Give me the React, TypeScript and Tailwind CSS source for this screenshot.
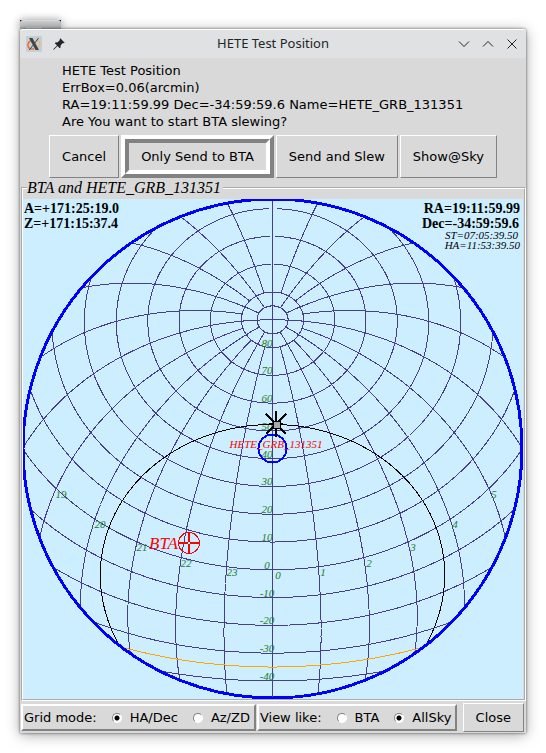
import type { ButtonHTMLAttributes, FC } from "react";

const LATITUDE = 43.65;
const CENTER = 249.5;
const SCALE = 250 / 90;

type SkyPoint = { x: number; y: number; z: number };

const rad = (deg: number) => (deg * Math.PI) / 180;

// Equidistant zenithal projection, north up, west right.
// Points below the horizon are folded back around the nadir.
const project = (ha: number, dec: number): SkyPoint => {
  const h = rad(ha);
  const d = rad(dec);
  const p = rad(LATITUDE);
  const up = Math.sin(p) * Math.sin(d) + Math.cos(p) * Math.cos(d) * Math.cos(h);
  const west = Math.cos(d) * Math.sin(h);
  const north =
    Math.sin(d) * Math.cos(p) - Math.cos(d) * Math.sin(p) * Math.cos(h);
  const z = (Math.acos(Math.max(-1, Math.min(1, up))) * 180) / Math.PI;
  const len = Math.hypot(west, north) || 1;
  const r = (z > 90 ? 180 - z : z) * SCALE;
  return { x: CENTER + (r * west) / len, y: CENTER - (r * north) / len, z };
};

const toPath = (points: SkyPoint[], keep: (p: SkyPoint) => boolean) => {
  let pen = false;
  let path = "";
  points.forEach((p) => {
    if (!keep(p)) {
      pen = false;
      return;
    }
    path += `${pen ? "L" : "M"}${p.x.toFixed(1)} ${p.y.toFixed(1)}`;
    pen = true;
  });
  return path;
};

const visible = (p: SkyPoint) => p.z <= 90;
const hidden = (p: SkyPoint) => p.z >= 90;

const parallel = (dec: number, from: number, to: number) => {
  const points: SkyPoint[] = [];
  for (let ha = from; ha <= to; ha += 0.5) points.push(project(ha, dec));
  return points;
};

const meridian = (hour: number) => {
  const top = hour % 6 === 0 ? 90 : hour % 2 === 0 ? 85 : 80;
  const points: SkyPoint[] = [];
  for (let dec = top; dec >= -46; dec -= 1) points.push(project(hour * 15, dec));
  return points;
};

const decRings = [85, 80, 70, 60, 50, 40, 30, 20, 10, 0, -10, -20, -30, -40];
const decLabels = decRings.slice(1);
const hourLabels = [19, 20, 21, 22, 23, 0, 1, 2, 3, 4, 5];
const hours = Array.from({ length: 24 }, (_, i) => i);

const SkyChart: FC = () => (
  <svg
    viewBox="0 0 500 500"
    className="block h-auto w-full bg-[#cceeff] font-['Liberation_Serif',serif]"
    role="img"
    aria-label="All sky chart"
  >
    <g fill="none" stroke="#483d8b" strokeWidth="1" shapeRendering="crispEdges">
      {decRings.map((dec) => (
        <path key={dec} d={toPath(parallel(dec, -178.5, 178.5), visible)} />
      ))}
      {hours.map((hour) => (
        <path key={hour} d={toPath(meridian(hour), visible)} />
      ))}
    </g>
    <g fill="#1e7d2a" fontSize="11" fontStyle="italic" textAnchor="middle">
      {decLabels.map((dec) => (
        <text key={dec} x="244" y={Math.round(project(0, dec).y) - 1}>
          {dec}
        </text>
      ))}
      {hourLabels.map((hour) => {
        const p = project(hour * 15, 0);
        return (
          <text key={hour} x={Math.round(p.x) + 5} y={Math.round(p.y) + 9}>
            {hour}
          </text>
        );
      })}
    </g>
    <g fill="none" shapeRendering="crispEdges">
      <path d={toPath(parallel(-35, 0, 360), hidden)} stroke="#000" />
      <path d={toPath(parallel(-35, -90, 90), visible)} stroke="#ffa500" />
      <circle cx="249.5" cy="249.5" r="249.5" stroke="#00f" strokeWidth="3" />
      <circle cx="249.5" cy="249.5" r="14" stroke="#00f" strokeWidth="2" />
    </g>

    <g stroke="#000" strokeWidth="2" shapeRendering="crispEdges">
      <path d="M253 212V238M243 215L263 235M263 215L243 235M246 225H260" />
      <rect x="250" y="222" width="7" height="7" fill="#a9a9a9" strokeWidth="1" />
    </g>
    <text
      x="253"
      y="249"
      fontSize="11"
      fontStyle="italic"
      textAnchor="middle"
      fill="#f00"
    >
      HETE_GRB_131351
    </text>

    <g fill="none" stroke="#f00" shapeRendering="crispEdges">
      <circle cx="166" cy="344" r="10.5" />
      <path d="M166 333V343M166 345V355M155 344H165M167 344H177" strokeWidth="2" />
    </g>
    <text x="126" y="350" fontSize="17" fontStyle="italic" fill="#f00">
      BTA
    </text>

    <g fontSize="14" fontWeight="bold">
      <text x="1" y="14">A=+171:25:19.0</text>
      <text x="1" y="29">Z=+171:15:37.4</text>
      <text x="497" y="14" textAnchor="end">
        RA=19:11:59.99
      </text>
      <text x="496" y="29" textAnchor="end">
        Dec=-34:59:59.6
      </text>
    </g>
    <g fontSize="11" fontStyle="italic" textAnchor="end">
      <text x="495" y="40">ST=07:05:39.50</text>
      <text x="497" y="50">HA=11:53:39.50</text>
    </g>
  </svg>
);

const TkButton: FC<ButtonHTMLAttributes<HTMLButtonElement>> = ({
  className = "",
  ...props
}) => (
  <button
    type="button"
    className={`border border-t-white border-r-[#828282] border-b-[#828282] border-l-white bg-[#d9d9d9] px-3 whitespace-nowrap ${className}`}
    {...props}
  />
);

type TkRadioProps = {
  name: string;
  label: string;
  defaultChecked?: boolean;
};

const TkRadio: FC<TkRadioProps> = ({ name, label, defaultChecked }) => (
  <label className="flex items-center gap-2 whitespace-nowrap">
    <input
      type="radio"
      name={name}
      defaultChecked={defaultChecked}
      className="size-[10px] appearance-none rounded-full border border-t-[#828282] border-r-white border-b-white border-l-[#828282] bg-white checked:bg-[radial-gradient(circle,#000_2px,#fff_3px)]"
    />
    {label}
  </label>
);

const XLogo: FC = () => (
  <svg viewBox="0 0 16 16" className="size-4" aria-hidden="true">
    <rect width="16" height="16" rx="1" fill="#c3ced6" />
    <path
      d="M6 4.500C3 5 1.500 7.500 2 9.800C2.500 12 5 13.300 8 12.800"
      fill="none"
      stroke="#f0702a"
      strokeWidth="1.500"
    />
    <path
      d="M10 3.800C13 4.500 14.600 7 13.800 9.300C13.200 11 12 12 10.500 12.500"
      fill="none"
      stroke="#f3b66f"
      strokeWidth="1.200"
    />
    <path d="M3 2H6.500L13 14H9.500Z" fill="#444" />
    <path d="M12.500 2L8.800 7M7 9.200L3.300 14" stroke="#444" strokeWidth="1" />
  </svg>
);

const PinIcon: FC = () => (
  <svg viewBox="0 0 12 12" className="size-3" aria-hidden="true">
    <path
      d="M7.300 0.300L11.700 4.700L10.800 5.300L9.900 5.100L7.700 7.300L7.500 9.600L6.700 10.200L4.500 8L1 11.600L0.200 11.800L0.400 11L4 7.500L1.800 5.300L2.400 4.500L4.700 4.300L6.900 2.100L6.700 1.200Z"
      fill="#232629"
    />
  </svg>
);

const TitleBar: FC = () => (
  <header className="grid h-[29px] grid-cols-[1fr_auto_1fr] items-center rounded-t-[3px] border-t border-white bg-[#dfe1e3] px-1.5 font-['Noto_Sans',sans-serif] text-[13px] text-[#232629]">
    <div className="flex items-center gap-[11px]">
      <XLogo />
      <button type="button" aria-label="Pin">
        <PinIcon />
      </button>
    </div>
    <h1>HETE Test Position</h1>
    <div className="flex items-center justify-end gap-3 pr-0.5">
      <button type="button" aria-label="Minimize">
        <svg viewBox="0 0 12 12" className="size-3" aria-hidden="true">
          <path d="M1 3.500L6 8.500L11 3.500" fill="none" stroke="#232629" />
        </svg>
      </button>
      <button type="button" aria-label="Maximize">
        <svg viewBox="0 0 12 12" className="size-3" aria-hidden="true">
          <path d="M1 8.500L6 3.500L11 8.500" fill="none" stroke="#232629" />
        </svg>
      </button>
      <button type="button" aria-label="Close window">
        <svg viewBox="0 0 12 12" className="size-3" aria-hidden="true">
          <path
            d="M1.500 1.500L10.500 10.500M10.500 1.500L1.500 10.500"
            fill="none"
            stroke="#232629"
          />
        </svg>
      </button>
    </div>
  </header>
);

const App: FC = () => (
  <main className="min-h-screen bg-white px-5 pt-5 pb-5 font-['DejaVu_Sans',sans-serif] text-[13px] text-black">
    <div className="h-[9px] w-[41px] overflow-hidden bg-black shadow-[0_0_8px_rgba(0,0,0,0.4)]">
      <div className="h-full rounded-t-[3px] border-t border-[#ddd] bg-linear-to-b from-[#cfd1d2] to-[#b0b2b3] px-1.5 pt-1.5">
        <XLogo />
      </div>
    </div>
    <div className="relative rounded-t-[3px] bg-[#d9d9d9] shadow-[0_2px_14px_rgba(0,0,0,0.35),0_0_3px_rgba(0,0,0,0.6)]">
      <TitleBar />
      <div className="px-[42px] pt-1 pb-[5px] text-[13px] leading-[17px]">
        <p>HETE Test Position</p>
        <p>ErrBox=0.06(arcmin)</p>
        <p>RA=19:11:59.99 Dec=-34:59:59.6 Name=HETE_GRB_131351</p>
        <p>Are You want to start BTA slewing?</p>
      </div>

      <div className="flex h-[43px] justify-center gap-0.5">
        <TkButton>Cancel</TkButton>
        <button
          type="button"
          className="border-4 border-t-white border-r-[#828282] border-b-[#828282] border-l-white whitespace-nowrap"
        >
          <span className="flex h-full items-center border-4 border-t-[#828282] border-r-white border-b-white border-l-[#828282] px-3">
            Only Send to BTA
          </span>
        </button>
        <TkButton>Send and Slew</TkButton>
        <TkButton>Show@Sky</TkButton>
      </div>

      <fieldset className="mt-px ml-px border-2 border-white pt-0.5 pr-px [border-style:groove]">
        <legend className="ml-1 pr-0.5 font-['Liberation_Serif',serif] text-[16px] leading-[18px] italic">
          BTA and HETE_GRB_131351
        </legend>
        <SkyChart />
      </fieldset>

      <div className="flex items-center justify-between pt-0.5 pr-0.5 pb-px pl-px">
        <div className="flex gap-px">
          <div
            role="radiogroup"
            aria-label="Grid mode"
            className="flex h-[27px] items-center border-2 border-t-white border-r-[#828282] border-b-[#828282] border-l-white pr-1 pl-px"
          >
            <span className="mr-[15px]">Grid mode:</span>
            <div className="flex gap-[15px]">
              <TkRadio name="grid" label="HA/Dec" defaultChecked />
              <TkRadio name="grid" label="Az/ZD" />
            </div>
          </div>
          <div
            role="radiogroup"
            aria-label="View like"
            className="flex h-[27px] items-center border-2 border-t-white border-r-[#828282] border-b-[#828282] border-l-white pr-1 pl-px"
          >
            <span className="mr-[15px]">View like:</span>
            <div className="flex gap-[15px]">
              <TkRadio name="view" label="BTA" />
              <TkRadio name="view" label="AllSky" defaultChecked />
            </div>
          </div>
        </div>
        <TkButton className="h-[29px]">Close</TkButton>
      </div>
    </div>
  </main>
);

export default App;
